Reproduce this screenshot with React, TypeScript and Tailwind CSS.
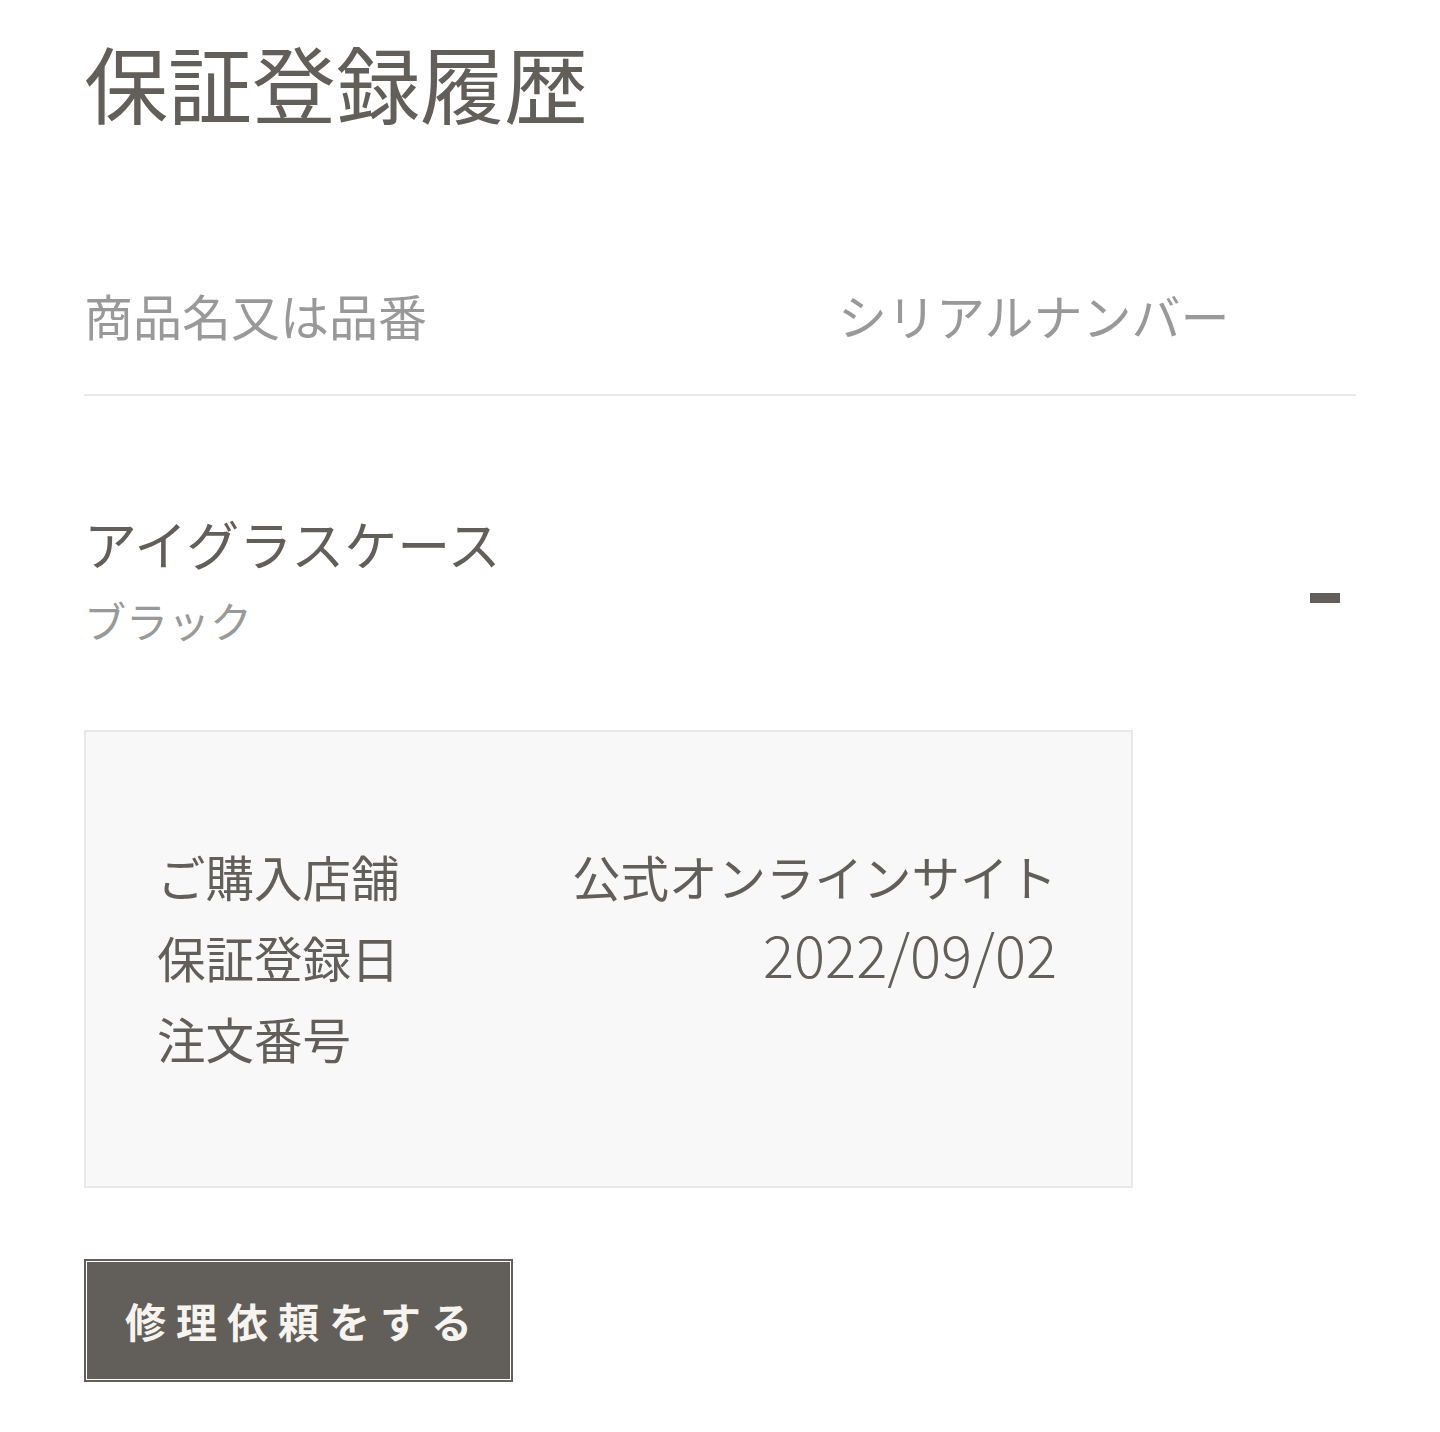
import React from 'react';

const font = { fontFamily: '"Noto Sans CJK JP", "Noto Sans", sans-serif' };

const rows = [
  { label: 'ご購入店舗', value: '公式オンラインサイト', big: false },
  { label: '保証登録日', value: '2022/09/02', big: true },
  { label: '注文番号', value: '', big: false },
];

const App = () => {
  return (
    <div className="min-h-screen bg-white px-[84px] pt-[22px] pb-[50px]" style={font}>
      <h1 className="text-[84px] leading-[120px] font-normal text-[#625e59]">保証登録履歴</h1>

      <div className="mt-[137px] flex border-b-2 border-[#e8e8e8] pb-[43px] text-[49px] leading-[72px] text-[#999999]">
        <div className="w-[754px]">商品名又は品番</div>
        <div>シリアルナンバー</div>
      </div>

      <div className="mt-[111px] flex items-start justify-between">
        <div>
          <div className="text-[53px] leading-[72px] text-[#625e59]">アイグラスケース</div>
          <div className="mt-[11px] text-[42px] leading-[60px] text-[#999999]">ブラック</div>
        </div>
        <div className="mt-[86px] mr-[16px] h-[10px] w-[30px] bg-[#625e59]"></div>
      </div>

      <div className="mt-[80px] w-[1049px] border-2 border-[#e8e8e8] bg-[#f8f8f8] pl-[71px] pr-[74px] pt-[104px] pb-[107px]">
        {rows.map((row) => (
          <div key={row.label} className="flex h-[81px] items-baseline justify-between text-[48.5px] leading-[81px] text-[#625e59]">
            <span>{row.label}</span>
            <span className={row.big ? 'text-[58px] leading-[70px] font-light' : ''}>{row.value}</span>
          </div>
        ))}
      </div>

      <button className="mt-[71px] flex h-[123px] w-[429px] items-center justify-center border-2 border-[#625e59] bg-[#625e59] pl-[10px] text-[41px] font-bold tracking-[10px] text-[#f7f4ef] shadow-[inset_0_0_0_1px_#ffffff]">
        修理依頼をする
      </button>
    </div>
  );
};

export default App;
